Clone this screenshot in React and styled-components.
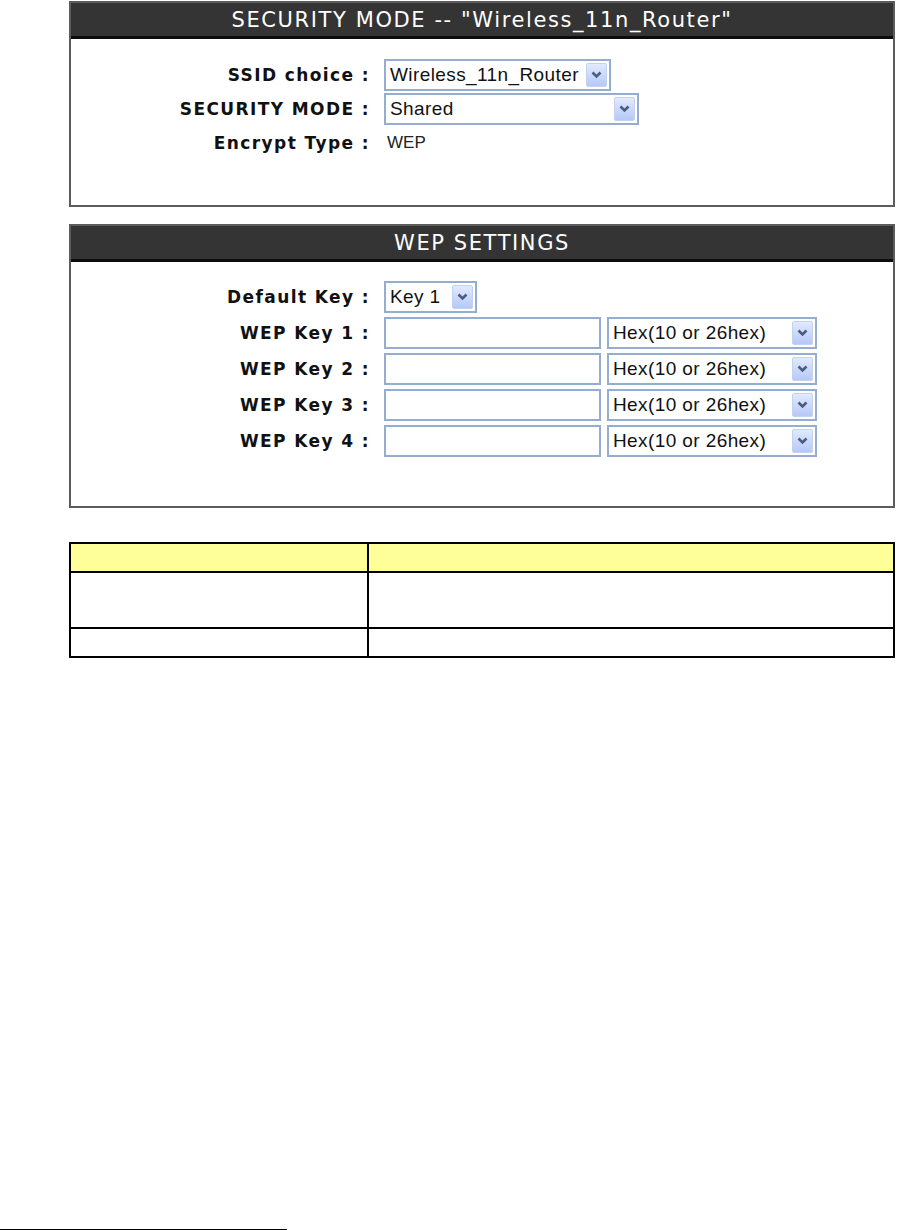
import React from "react";
import styled, { createGlobalStyle } from "styled-components";

const GlobalStyle = createGlobalStyle`
  html, body {
    margin: 0;
    padding: 0;
    background: #ffffff;
  }
  body {
    font-family: "DejaVu Sans", Verdana, sans-serif;
  }
`;

const Page = styled.div`
  width: 897px;
  height: 1230px;
  box-sizing: border-box;
  padding: 1px 2px 0 69px;
  position: relative;
`;

const Panel = styled.section`
  border: 2px solid #5c5c5c;
  box-sizing: border-box;
  margin-bottom: ${(p) => p.gap || 0}px;
  background: #fff;
`;

const PanelHead = styled.div`
  height: 33px;
  background: #343434;
  border-bottom: 3px solid #0c0c0c;
  color: #ffffff;
  font-family: "DejaVu Sans", Verdana, sans-serif;
  font-size: 21px;
  display: flex;
  align-items: center;
  justify-content: center;
  letter-spacing: 1.6px;
`;

const PanelBody = styled.div`
  padding: ${(p) => p.top}px 0 ${(p) => p.bottom}px 0;
  display: flex;
  flex-direction: column;
`;

const Row = styled.div`
  display: grid;
  grid-template-columns: 299px 1fr;
  column-gap: 14px;
  align-items: center;
  height: ${(p) => p.h}px;
`;

const Label = styled.div`
  text-align: right;
  font-weight: bold;
  font-size: 17px;
  letter-spacing: 1.4px;
  color: #111;
  white-space: nowrap;
`;

const Controls = styled.div`
  display: flex;
  align-items: center;
  gap: 6px;
`;

const PlainValue = styled.span`
  font-family: "Liberation Sans", Arial, sans-serif;
  font-size: 17px;
  color: #222;
  padding-left: 3px;
`;

const SelectBox = styled.div`
  width: ${(p) => p.w}px;
  height: 32px;
  box-sizing: border-box;
  border: 2px solid #95add0;
  background: #fff;
  display: flex;
  align-items: center;
  justify-content: space-between;
  padding: 0 2px 0 4px;
  font-family: "Liberation Sans", Arial, sans-serif;
  font-size: 19px;
  letter-spacing: 0.4px;
  color: #111;
  white-space: nowrap;
`;

const ArrowBtn = styled.span`
  width: 21px;
  height: 24px;
  box-sizing: border-box;
  border: 1px solid #c4d2f2;
  border-radius: 2px;
  background: linear-gradient(180deg, #e2eafe 0%, #c9d7fb 55%, #b6c8f7 100%);
  display: flex;
  align-items: center;
  justify-content: center;
  flex-shrink: 0;
`;

const TextBox = styled.input`
  width: ${(p) => p.w}px;
  height: 32px;
  box-sizing: border-box;
  border: 2px solid #95add0;
  background: #fff;
  margin: 0;
  padding: 0 4px;
  outline: none;
`;

const InfoTable = styled.table`
  margin-top: 34px;
  width: 826px;
  border-collapse: collapse;
  table-layout: fixed;
  td, th {
    border: 2px solid #000;
    padding: 0;
  }
`;

const HeadRow = styled.tr`
  height: 29px;
  background: #ffff99;
`;

const BodyRow = styled.tr`
  height: ${(p) => p.h}px;
`;

const Footnote = styled.div`
  position: absolute;
  left: 0;
  bottom: 0;
  width: 287px;
  border-top: 1px solid #000;
`;

const Chevron = () => (
  <svg width="11" height="8" viewBox="0 0 11 8">
    <path d="M1.5 1.5 L5.5 5.5 L9.5 1.5" fill="none" stroke="#4a5d80" strokeWidth="2.6" />
  </svg>
);

const Select = ({ w, value }) => (
  <SelectBox w={w}>
    <span>{value}</span>
    <ArrowBtn>
      <Chevron />
    </ArrowBtn>
  </SelectBox>
);

const wepKeys = [1, 2, 3, 4];

export default function App() {
  return (
    <>
      <GlobalStyle />
      <Page>
        <Panel gap={17}>
          <PanelHead>SECURITY MODE -- "Wireless_11n_Router"</PanelHead>
          <PanelBody top={19} bottom={45}>
            <Row h={34}>
              <Label>SSID choice :</Label>
              <Controls>
                <Select w={227} value="Wireless_11n_Router" />
              </Controls>
            </Row>
            <Row h={34}>
              <Label>SECURITY MODE :</Label>
              <Controls>
                <Select w={255} value="Shared" />
              </Controls>
            </Row>
            <Row h={34}>
              <Label>Encrypt Type :</Label>
              <Controls>
                <PlainValue>WEP</PlainValue>
              </Controls>
            </Row>
          </PanelBody>
        </Panel>

        <Panel>
          <PanelHead>WEP SETTINGS</PanelHead>
          <PanelBody top={17} bottom={47}>
            <Row h={36}>
              <Label>Default Key :</Label>
              <Controls>
                <Select w={93} value="Key 1" />
              </Controls>
            </Row>
            {wepKeys.map((k) => (
              <Row h={36} key={k}>
                <Label>WEP Key {k} :</Label>
                <Controls>
                  <TextBox w={217} type="text" />
                  <Select w={210} value="Hex(10 or 26hex)" />
                </Controls>
              </Row>
            ))}
          </PanelBody>
        </Panel>

        <InfoTable>
          <colgroup>
            <col style={{ width: "298px" }} />
            <col />
          </colgroup>
          <tbody>
            <HeadRow>
              <th></th>
              <th></th>
            </HeadRow>
            <BodyRow h={56}>
              <td></td>
              <td></td>
            </BodyRow>
            <BodyRow h={29}>
              <td></td>
              <td></td>
            </BodyRow>
          </tbody>
        </InfoTable>
        <Footnote />
      </Page>
    </>
  );
}
